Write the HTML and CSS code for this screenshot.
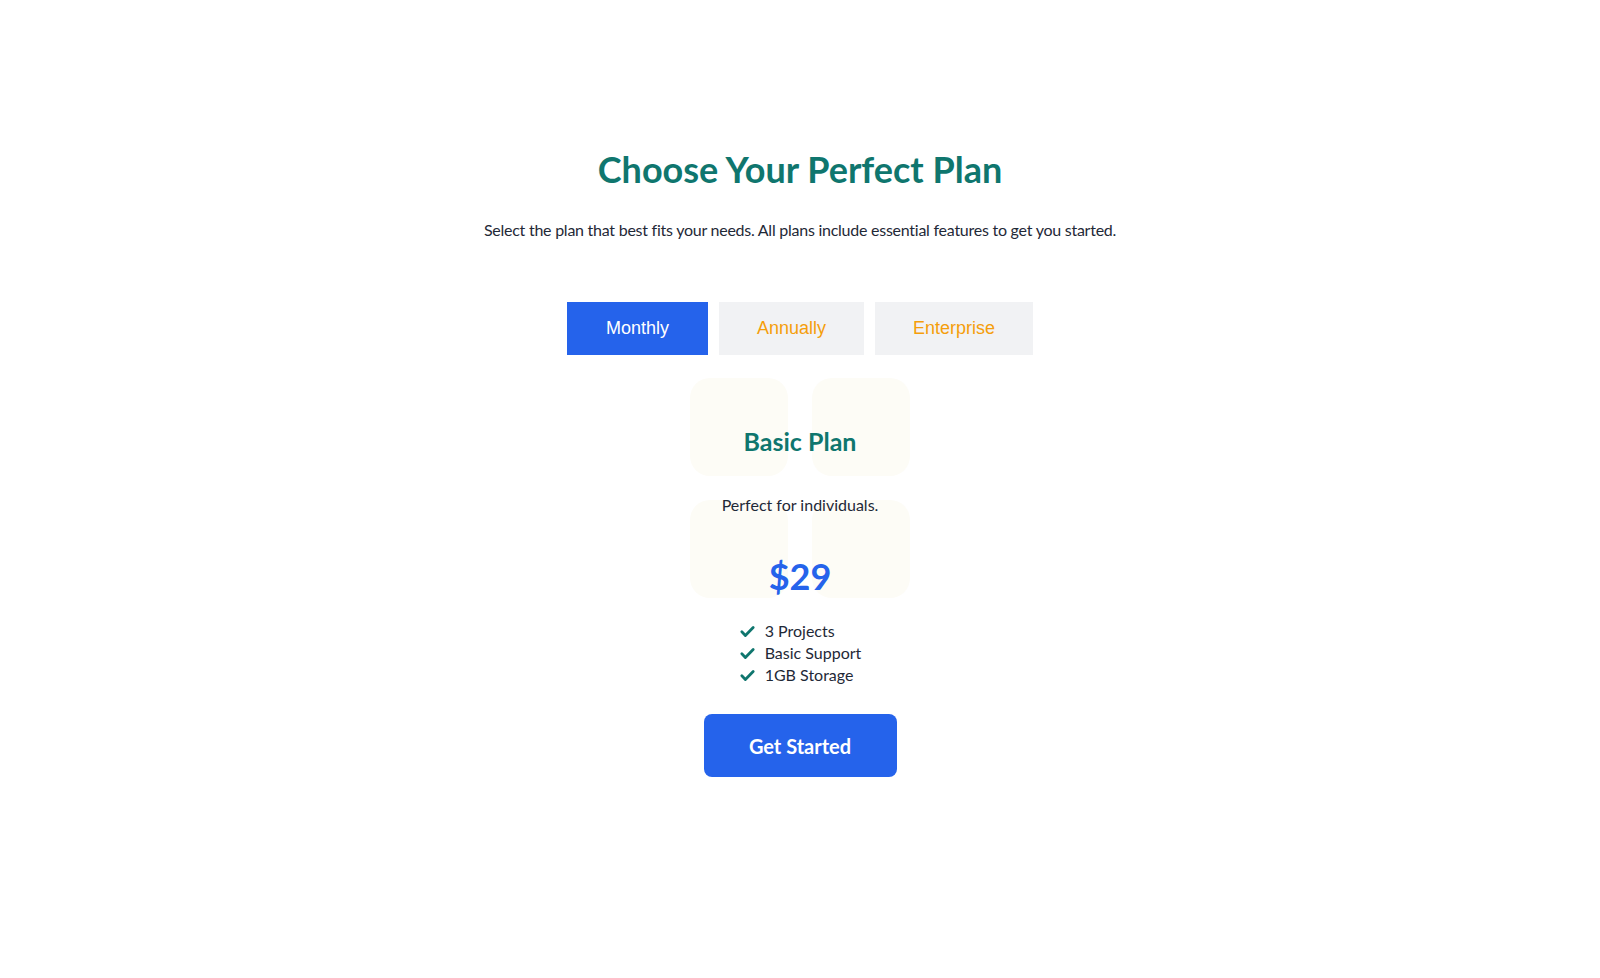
FILE: index.html
```html
<!DOCTYPE html>
<html lang="en">
<head>
<meta charset="utf-8">
<title>Pricing</title>
<link rel="stylesheet" href="styles.css">
</head>
<body>
<main class="page">
  <h1 class="title">Choose Your Perfect Plan</h1>
  <p class="subtitle">Select the plan that best fits your needs. All plans include essential features to get you started.</p>
  <div class="tabs">
    <button class="tab tab-active">Monthly</button>
    <button class="tab">Annually</button>
    <button class="tab">Enterprise</button>
  </div>
  <section class="card">
    <div class="blobs">
      <span class="blob"></span><span class="blob"></span><span class="blob"></span><span class="blob"></span>
    </div>
    <h2 class="plan-name">Basic Plan</h2>
    <p class="plan-desc">Perfect for individuals.</p>
    <div class="price">$29</div>
    <ul class="features">
      <li><svg class="check" viewBox="0 0 24 24"><path d="M4 12.5l5 5L20 6.5" fill="none" stroke="currentColor" stroke-width="4" stroke-linecap="round" stroke-linejoin="round"/></svg>3 Projects</li>
      <li><svg class="check" viewBox="0 0 24 24"><path d="M4 12.5l5 5L20 6.5" fill="none" stroke="currentColor" stroke-width="4" stroke-linecap="round" stroke-linejoin="round"/></svg>Basic Support</li>
      <li><svg class="check" viewBox="0 0 24 24"><path d="M4 12.5l5 5L20 6.5" fill="none" stroke="currentColor" stroke-width="4" stroke-linecap="round" stroke-linejoin="round"/></svg>1GB Storage</li>
    </ul>
    <button class="cta">Get Started</button>
  </section>
</main>
</body>
</html>
```
FILE: styles.css
```css
* { box-sizing: border-box; }
html, body { margin: 0; background: #ffffff; }
body { font-family: "Lato", "Noto Sans", sans-serif; color: #1f2937; }
.page {
  width: 100%;
  padding-top: 148px;
  display: flex;
  flex-direction: column;
  align-items: center;
}
.title {
  margin: 0;
  font-size: 36px;
  line-height: 42px;
  font-weight: 700;
  color: #0f766e;
}
.subtitle {
  margin: 28px 0 0;
  font-size: 16px;
  line-height: 24px;
  letter-spacing: -0.25px;
  color: #1f2937;
}
.tabs {
  margin-top: 60px;
  display: flex;
  gap: 11px;
}
.tab {
  height: 53px;
  border: none;
  padding: 0 38px;
  font-family: "Liberation Sans", Arial, sans-serif;
  font-size: 18px;
  background: #f1f2f4;
  color: #f59e0b;
}
.tab-active { background: #2563eb; color: #ffffff; padding: 0 39px; }
.card {
  position: relative;
  margin-top: 23px;
  display: flex;
  flex-direction: column;
  align-items: center;
  padding-top: 47px;
}
.blobs {
  position: absolute;
  top: 0;
  left: 50%;
  transform: translateX(-50%);
  display: grid;
  grid-template-columns: 98px 98px;
  gap: 24px;
  z-index: 0;
}
.blob { width: 98px; height: 98px; border-radius: 20px; background: #fdfcf6; }
.plan-name, .plan-desc, .price, .features, .cta { position: relative; z-index: 1; }
.plan-name {
  margin: 0;
  font-size: 25px;
  line-height: 32px;
  font-weight: 700;
  color: #0f766e;
}
.plan-desc { margin: 36px 0 0; font-size: 16px; line-height: 24px; color: #1f2937; }
.price {
  margin-top: 37px;
  font-size: 36px;
  line-height: 44px;
  font-weight: 700;
  color: #2563eb;
}
.features { list-style: none; margin: 22px 0 0; padding: 0; font-size: 16px; line-height: 22px; }
.features li { display: flex; align-items: center; gap: 9px; }
.check { width: 17px; height: 17px; color: #0f766e; }
.cta {
  margin-top: 28px;
  width: 193px;
  height: 63px;
  border: none;
  border-radius: 8px;
  background: #2563eb;
  color: #ffffff;
  font-family: "Lato", sans-serif;
  font-size: 20px;
  font-weight: 700;
}
```
